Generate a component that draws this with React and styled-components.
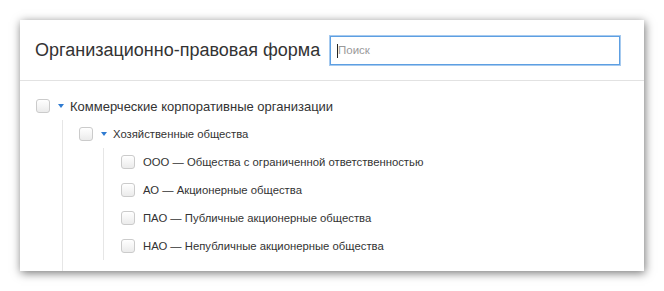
import React from 'react';
import styled, { createGlobalStyle } from 'styled-components';

const GlobalStyle = createGlobalStyle`
  body {
    margin: 0;
    padding: 20px;
    background: #fff;
    font-family: "Liberation Sans", Arial, sans-serif;
  }
`;

const Card = styled.div`
  background: #fff;
  height: 251px;
  box-shadow: 1px 2px 9px rgba(0, 0, 0, 0.55);
  display: flex;
  flex-direction: column;
`;

const Header = styled.div`
  display: flex;
  align-items: center;
  justify-content: space-between;
  height: 60px;
  padding: 0 24px 0 15px;
  border-bottom: 1px solid #e2e2e2;
`;

const Title = styled.h1`
  margin: 0;
  font-size: 18px;
  font-weight: normal;
  color: #333;
`;

const SearchWrap = styled.div`
  position: relative;
  &::before {
    content: '';
    position: absolute;
    left: 7px;
    top: 8px;
    width: 1px;
    height: 14px;
    background: #222;
  }
`;

const Search = styled.input`
  box-sizing: border-box;
  width: 290px;
  height: 29px;
  padding: 0 7px;
  border: 1px solid #5d9fe2;
  box-shadow: 0 0 0 1px rgba(93, 159, 226, 0.55);
  outline: none;
  font-family: inherit;
  font-size: 11.5px;
  color: #333;
  caret-color: transparent;
  &::placeholder {
    color: #9a9a9a;
  }
`;

const Tree = styled.div`
  flex: 1;
  padding: 11px 0 0 16px;
  display: flex;
  flex-direction: column;
`;

const Row = styled.div`
  display: flex;
  align-items: center;
  height: 28px;
  font-size: ${p => p.$size}px;
  color: #333;
`;

const Check = styled.span`
  box-sizing: border-box;
  width: 14px;
  height: 14px;
  border: 1px solid #cbcbcb;
  border-radius: 3px;
  background: linear-gradient(#fff, #ebebeb);
  margin-right: 8px;
  flex: none;
`;

const Caret = styled.span`
  width: 0;
  height: 0;
  border-left: ${p => p.$w}px solid transparent;
  border-right: ${p => p.$w}px solid transparent;
  border-top: 4px solid #2f7bd1;
  margin-right: 6px;
  flex: none;
`;

const Children = styled.div`
  display: flex;
  flex-direction: column;
  flex: ${p => (p.$grow ? 1 : 'none')};
  margin-left: ${p => p.$indent}px;
  padding-left: ${p => p.$pad}px;
  border-left: 1px solid #e6e6e6;
`;

const leaves = [
  'ООО — Общества с ограниченной ответственностью',
  'АО — Акционерные общества',
  'ПАО — Публичные акционерные общества',
  'НАО — Непубличные акционерные общества',
];

export default function App() {
  return (
    <>
      <GlobalStyle />
      <Card>
        <Header>
          <Title>Организационно-правовая форма</Title>
          <SearchWrap>
            <Search placeholder="Поиск" />
          </SearchWrap>
        </Header>
        <Tree>
          <Row $size={13}>
            <Check />
            <Caret $w={3.5} />
            Коммерческие корпоративные организации
          </Row>
          <Children $grow $indent={26} $pad={16}>
            <Row $size={11.3}>
              <Check />
              <Caret $w={3} />
              Хозяйственные общества
            </Row>
            <Children $indent={24} $pad={17}>
              {leaves.map(t => (
                <Row key={t} $size={11.3}>
                  <Check />
                  {t}
                </Row>
              ))}
            </Children>
          </Children>
        </Tree>
      </Card>
    </>
  );
}
